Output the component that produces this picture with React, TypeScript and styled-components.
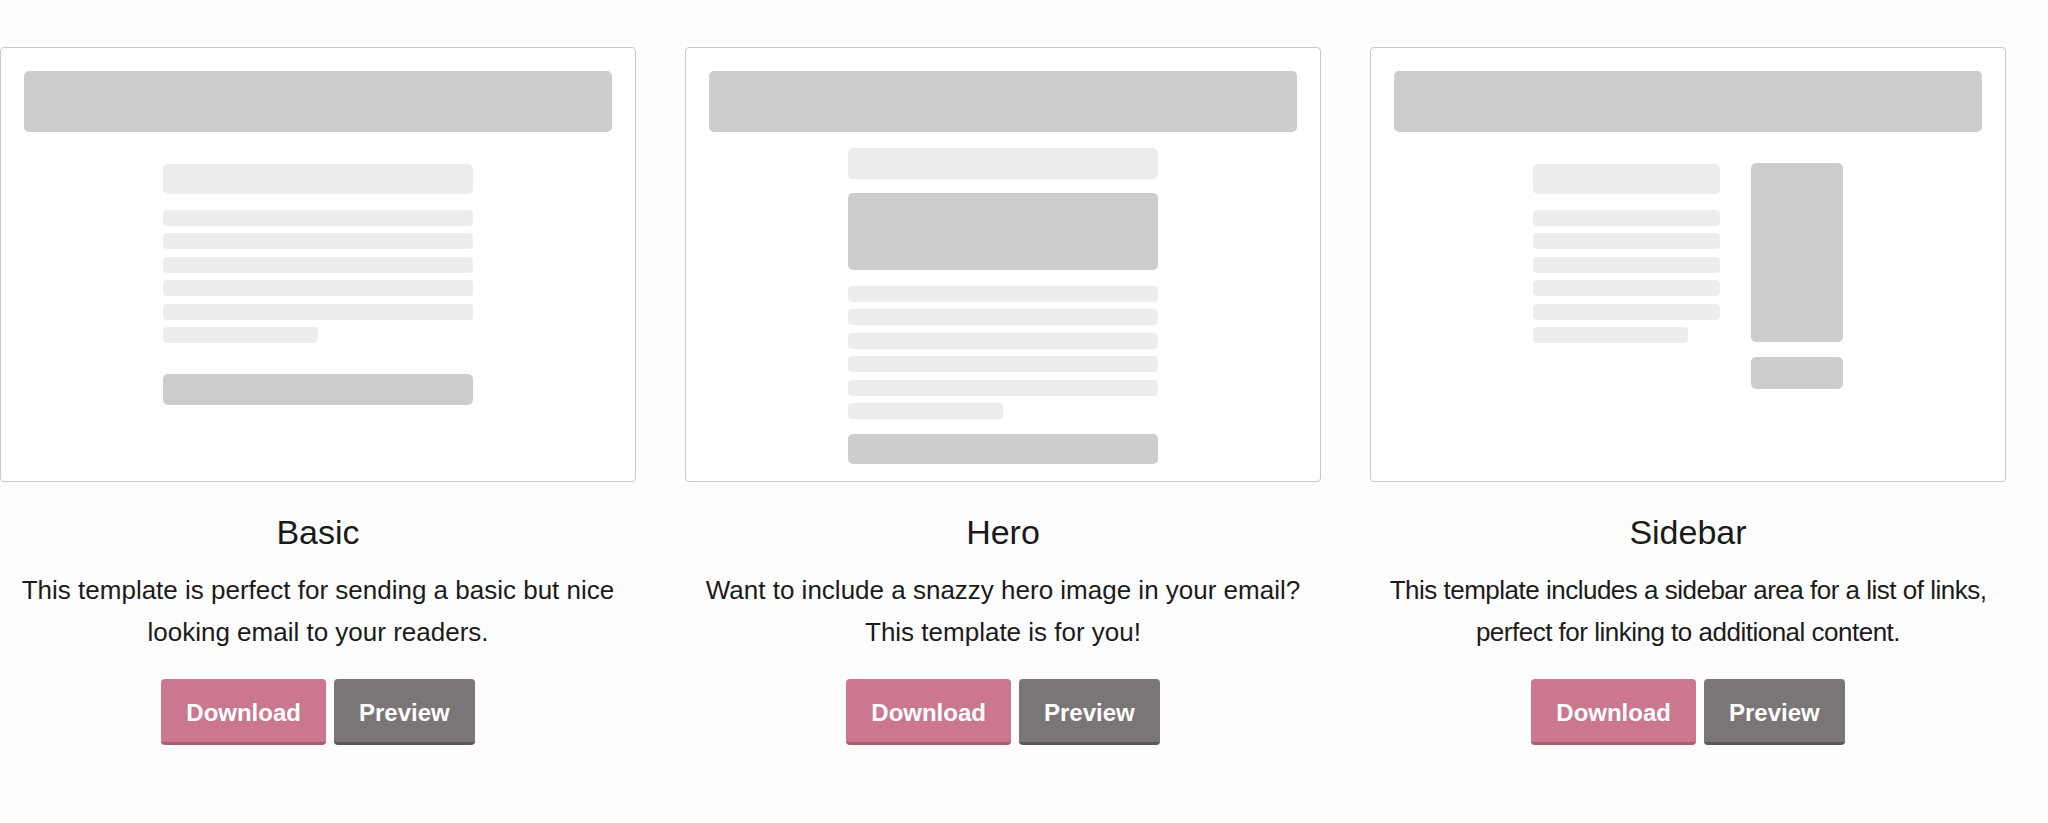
import React from "react";
import styled, { createGlobalStyle } from "styled-components";

const Global = createGlobalStyle`
  html, body {
    margin: 0;
    padding: 0;
    background: #fdfdfd;
  }
  body {
    font-family: "Liberation Sans", Arial, Helvetica, sans-serif;
    color: #1b1b1b;
  }
`;

const Page = styled.div`
  display: grid;
  grid-template-columns: repeat(3, 636px);
  column-gap: 49px;
  padding: 47px 0 40px 0;
`;

const Template = styled.section`
  display: flex;
  flex-direction: column;
  align-items: center;
`;

const Thumb = styled.div`
  box-sizing: border-box;
  width: 636px;
  height: 435px;
  background: #fff;
  border: 1px solid #c9c9c9;
  border-radius: 4px;
  padding: 23px 23px 0 23px;
  display: flex;
  flex-direction: column;
  align-items: center;
`;

const HeaderBar = styled.div`
  align-self: stretch;
  height: 61px;
  background: #cdcdcd;
  border-radius: 5px;
  flex-shrink: 0;
`;

const Content = styled.div<{ $top: number }>`
  margin-top: ${(p) => p.$top}px;
  width: 310px;
  display: flex;
  flex-direction: column;
`;

const Split = styled.div`
  margin-top: 31px;
  width: 310px;
  display: grid;
  grid-template-columns: 187px 92px;
  column-gap: 31px;
  align-items: start;
`;

const Column = styled.div`
  display: flex;
  flex-direction: column;
`;

const Block = styled.div<{ $h: number; $mt?: number; $dark?: boolean }>`
  height: ${(p) => p.$h}px;
  margin-top: ${(p) => p.$mt ?? 0}px;
  width: 100%;
  background: ${(p) => (p.$dark ? "#cdcdcd" : "#ececec")};
  border-radius: 5px;
  flex-shrink: 0;
`;

const Lines = styled.div<{ $mt: number }>`
  margin-top: ${(p) => p.$mt}px;
  display: flex;
  flex-direction: column;
  gap: 7.4px;
`;

const Line = styled.div<{ $short?: boolean }>`
  height: 16px;
  width: ${(p) => (p.$short ? "155px" : "100%")};
  background: #ededed;
  border-radius: 4px;
`;

const Title = styled.h2`
  margin: 30px 0 0 0;
  font-size: 34px;
  line-height: 40px;
  font-weight: 400;
  color: #1a1a1a;
  text-align: center;
`;

const Desc = styled.p<{ $tight?: boolean }>`
  margin: 18px 0 0 0;
  width: 636px;
  font-size: 26px;
  line-height: 41.6px;
  color: #1b1b1b;
  text-align: center;
  letter-spacing: ${(p) => (p.$tight ? "-0.5px" : "0")};
`;

const Actions = styled.div`
  margin-top: 26px;
  display: flex;
  gap: 8px;
`;

const Button = styled.button<{ $kind: "primary" | "secondary" }>`
  box-sizing: border-box;
  height: 66px;
  padding: 3px 25px 0 25px;
  border: none;
  border-bottom: 3px solid ${(p) => (p.$kind === "primary" ? "#a65e73" : "#5b5859")};
  border-radius: 4px;
  background: ${(p) => (p.$kind === "primary" ? "#ca778f" : "#7a7677")};
  color: #fff;
  font-family: "Liberation Sans", Arial, Helvetica, sans-serif;
  font-weight: 700;
  font-size: 24px;
  line-height: 29px;
  cursor: pointer;
`;

const BodyLines = ({ mt }: { mt: number }) => (
  <Lines $mt={mt}>
    <Line />
    <Line />
    <Line />
    <Line />
    <Line />
    <Line $short />
  </Lines>
);

const BasicThumb = () => (
  <Thumb>
    <HeaderBar />
    <Content $top={32}>
      <Block $h={30} />
      <BodyLines mt={16} />
      <Block $h={31} $mt={31} $dark />
    </Content>
  </Thumb>
);

const HeroThumb = () => (
  <Thumb>
    <HeaderBar />
    <Content $top={16}>
      <Block $h={31} />
      <Block $h={77} $mt={14} $dark />
      <BodyLines mt={16} />
      <Block $h={30} $mt={15} $dark />
    </Content>
  </Thumb>
);

const SidebarThumb = () => (
  <Thumb>
    <HeaderBar />
    <Split>
      <Column>
        <Block $h={30} $mt={1} />
        <BodyLines mt={16} />
      </Column>
      <Column>
        <Block $h={179} $dark />
        <Block $h={32} $mt={15} $dark />
      </Column>
    </Split>
  </Thumb>
);

const templates = [
  {
    name: "Basic",
    thumb: <BasicThumb />,
    desc: "This template is perfect for sending a basic but nice looking email to your readers.",
    tight: false,
  },
  {
    name: "Hero",
    thumb: <HeroThumb />,
    desc: "Want to include a snazzy hero image in your email? This template is for you!",
    tight: false,
  },
  {
    name: "Sidebar",
    thumb: <SidebarThumb />,
    desc: "This template includes a sidebar area for a list of links, perfect for linking to additional content.",
    tight: true,
  },
];

export default function App() {
  return (
    <>
      <Global />
      <Page>
        {templates.map((t) => (
          <Template key={t.name}>
            {t.thumb}
            <Title>{t.name}</Title>
            <Desc $tight={t.tight}>{t.desc}</Desc>
            <Actions>
              <Button $kind="primary">Download</Button>
              <Button $kind="secondary">Preview</Button>
            </Actions>
          </Template>
        ))}
      </Page>
    </>
  );
}
